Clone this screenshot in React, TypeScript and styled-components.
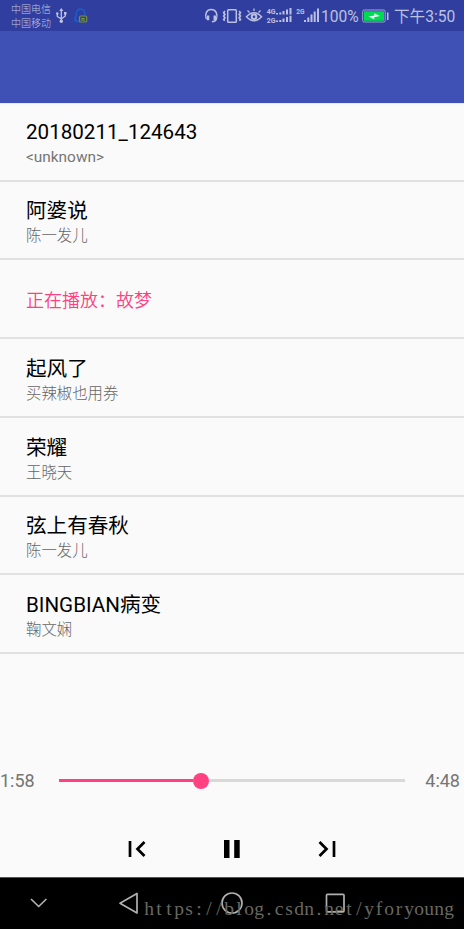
import React from "react";
import styled, { createGlobalStyle } from "styled-components";

const Global = createGlobalStyle`
  * { box-sizing: border-box; }
  body { margin: 0; background: #fff; font-family: Roboto, "Noto Sans CJK SC", sans-serif; }
`;
const Screen = styled.div`
  width: 464px; height: 929px; overflow: hidden; display: flex; flex-direction: column; background: #fafafa;
`;
const StatusBar = styled.header`
  height: 31px; flex: none; background: #303f9f; color: #bcc1e1; display: flex; align-items: center;
  padding: 1px 9px 0 11px; white-space: nowrap;
  svg { display: block; flex: none; }
`;
const Carriers = styled.div`
  width: 41px; font-size: 10px; line-height: 14px; margin-right: 2px; padding-top: 1px; font-weight: 300;
`;
const StatusIcons = styled.div<{ $push?: boolean }>`
  display: flex; align-items: center; flex: none; ${(p) => p.$push && "margin-left: auto;"}
`;
const StatusText = styled.span<{ $w: number; $size: number }>`
  width: ${(p) => p.$w}px; font-size: ${(p) => p.$size}px; line-height: 30px; padding-top: 1px; flex: none;
`;
const AppBar = styled.div`height: 72px; flex: none; background: #3f51b5;`;
const SongList = styled.ul`
  list-style: none; margin: 0; padding: 0; flex: none; height: 551px;
  display: grid; grid-template-rows: repeat(7, 78.71px);
  box-shadow: inset 0 1px #e4e7f6;
`;
const Song = styled.li`
  padding: 16.7px 26px 0; border-bottom: 2px solid #e1e1e1; white-space: nowrap;
  &:first-child { padding-top: 16px; }
`;
const Title = styled.div`font-size: 20.6px; line-height: 27px; color: #000;`;
const Artist = styled.div<{ $light: boolean }>`
  font-size: 15.4px; line-height: 22px; color: ${(p) => (p.$light ? "#666" : "#757575")};
  font-weight: ${(p) => (p.$light ? 300 : 400)};
`;
const Playing = styled.div`font-size: 18px; line-height: 48px; color: #ff4081; font-weight: 350;`;
const Progress = styled.div`
  height: 40px; margin-top: 106.5px; flex: none; display: grid; grid-template-columns: 59px 346px 1fr; align-items: center;
`;
const Time = styled.span<{ $end?: boolean }>`
  font-size: 18px; color: #757575; text-align: ${(p) => (p.$end ? "right" : "left")}; padding-right: ${(p) => (p.$end ? 4 : 0)}px;
`;
const Track = styled.div`
  height: 16px; display: grid; grid-template-columns: 133.5px 16px 1fr; align-items: center;
`;
const Bar = styled.div<{ $played?: boolean }>`
  height: 3px; background: ${(p) => (p.$played ? "#ff4081" : "#d9d9d9")};
`;
const Thumb = styled.div`width: 16px; height: 16px; border-radius: 50%; background: #ff4081;`;
const Controls = styled.div`
  height: 76.5px; flex: none; display: flex; justify-content: center; align-items: center; gap: 65px; padding-top: 20px;
`;
const ControlButton = styled.button`
  width: 30px; height: 30px; border: 0; padding: 0; background: none; display: block;
  svg { display: block; }
`;
const NavBar = styled.nav`
  position: relative; flex: 1; background: #000; border-top: 1px solid #555;
  svg { display: block; }
`;
const Watermark = styled.svg`
  position: absolute; left: 144px; top: 18px;
  text { font-family: "Liberation Serif", serif; font-size: 19.5px; fill: #686860; text-anchor: middle; }
`;

const songs = [
  { title: "20180211_124643", artist: "<unknown>" },
  { title: "阿婆说", artist: "陈一发儿" },
  { playing: "正在播放：故梦" },
  { title: "起风了", artist: "买辣椒也用券" },
  { title: "荣耀", artist: "王晓天" },
  { title: "弦上有春秋", artist: "陈一发儿" },
  { title: "BINGBIAN病变", artist: "鞠文娴" },
];

const address = "https://blog.csdn.net/yforyoung";
const charCentres = Array.from(address, (_, i) => 5 + i * 10).join(" ");

const LeftIcons = () => (
  <svg width="36" height="24" viewBox="54 4 36 24" fill="none" stroke="#c0c5e4">
    <path d="M61.3 10v11M57.3 13.5v3l4 2.5 4-3v-3" strokeWidth="1.3" />
    <path d="M61.3 8l2 3h-4z" fill="#c0c5e4" stroke="none" />
    <circle cx="57.3" cy="13.5" r="1.2" fill="#c0c5e4" stroke="none" />
    <path d="M64 12h2.5v2.5H64z" fill="#c0c5e4" stroke="none" />
    <circle cx="61.3" cy="21.2" r="1.7" fill="#c0c5e4" stroke="none" />
    <path d="M79 21.500h-2.500l-.5-1.500-1.200.5c-.2-2 .4-3.200 1.400-4.500 0-4.500 1.500-7 4.400-7s4.400 2.500 4.400 6.500" stroke="#1762c9" strokeWidth="1.300" />
    <rect x="79.500" y="16" width="7.200" height="6" rx="1" stroke="#72894f" strokeWidth="1.200" fill="#35514f" />
    <path d="M81.500 18.500h3M81 20h4" stroke="#91a756" strokeWidth=".8" />
  </svg>
);

const RightIcons = () => (
  <svg width="118" height="24" viewBox="203 4 118 24" fill="none" stroke="#bcc1e1">
    <path d="M206.300 19c-1.900-5.200.6-9.500 4.900-9.500 4.500 0 7 4.300 5.200 9.500-.7 1.900-2 2.700-4.500 2.700" strokeWidth="1.500" />
    <path d="M208 15.500v4.800M214.800 15.500v4.800" strokeWidth="2.500" />
    <rect x="227.700" y="9.700" width="8.600" height="12.600" rx=".8" strokeWidth="1.500" />
    <path d="M224.900 11l-1.200 1.700 1.200 1.700-1.200 1.700 1.200 1.700-1.200 1.700 1 1.200M239.200 11l1.200 1.700-1.200 1.700 1.200 1.700-1.200 1.700 1.200 1.700-1 1.200" strokeWidth="1.700" />
    <path d="M246.500 16.800q7.500-8 15 0-7.500 8-15 0z" strokeWidth="1.600" />
    <circle cx="254" cy="16.800" r="2.300" strokeWidth="2" />
    <path d="M247.500 10.500l2 2M254 8.500v2.500M260.500 10.500l-2 2" strokeWidth="1.300" />
    <g fill="#bcc1e1" stroke="none" fontFamily="Roboto" fontWeight="700" fontSize="7.500">
      <text x="266.700" y="14" textLength="8.800" lengthAdjust="spacingAndGlyphs">4G</text>
      <text x="266.700" y="22.500" textLength="8.800" lengthAdjust="spacingAndGlyphs">2G</text>
      <text x="296.300" y="14.200" textLength="8.300" lengthAdjust="spacingAndGlyphs">2G</text>
      <path d="M276 13h2v1.500h-2zM279.300 12.500h2v2h-2zM282.500 11h2v3.500h-2zM286 9.500h2v5h-2zM289.500 8h2v6.500h-2zM276 20.500h2V22h-2zM279.300 20h2v2h-2zM282.500 18.500h2V22h-2zM286 17h2v5h-2zM289.500 15.800h2V22h-2z" />
      <path d="M304 20h2v2h-2zM307.300 17.500h2V22h-2zM310.500 14.500h2V22h-2zM313.700 11.500h2V22h-2zM317 8.500h2V22h-2z" />
    </g>
  </svg>
);

const Battery = () => (
  <svg width="33" height="20" viewBox="361 6 33 20">
    <rect x="362.700" y="10" width="22.500" height="12" rx="1.500" fill="none" stroke="#9ea6d3" />
    <rect x="364" y="11.300" width="20" height="9.500" fill="#00d953" />
    <path d="M387 12.500h1.500v7.500H387z" fill="#bcc1e1" />
    <path d="M368.500 16.500l6-1-.5-2.200 6 2.700-6 1.200.5 2.200z" fill="#e6fff0" />
  </svg>
);

export default function App() {
  return (
    <>
      <Global />
      <Screen>
        <StatusBar>
          <Carriers>中国电信<br />中国移动</Carriers>
          <LeftIcons />
          <StatusIcons $push>
            <RightIcons />
            <StatusText $w={40} $size={15.6}>100%</StatusText>
            <Battery />
            <StatusText $w={61} $size={15.6}>下午3:50</StatusText>
          </StatusIcons>
        </StatusBar>
        <AppBar />
        <SongList>
          {songs.map((s, i) => (
            <Song key={i}>
              {s.playing ? (
                <Playing>{s.playing}</Playing>
              ) : (
                <>
                  <Title>{s.title}</Title>
                  <Artist $light={i > 0}>{s.artist}</Artist>
                </>
              )}
            </Song>
          ))}
        </SongList>
        <Progress>
          <Time>1:58</Time>
          <Track><Bar $played /><Thumb /><Bar /></Track>
          <Time $end>4:48</Time>
        </Progress>
        <Controls>
          <ControlButton aria-label="Previous">
            <svg width="30" height="30" viewBox="0 0 30 30" fill="none" stroke="#000" strokeWidth="2.700"><path d="M8 7v16M22.500 8l-7 7 7 7" /></svg>
          </ControlButton>
          <ControlButton aria-label="Pause">
            <svg width="30" height="30" viewBox="0 0 30 30"><path d="M7 6h5.500v18H7zM17.200 6h5.500v18h-5.500z" /></svg>
          </ControlButton>
          <ControlButton aria-label="Next">
            <svg width="30" height="30" viewBox="0 0 30 30" fill="none" stroke="#000" strokeWidth="2.700"><path d="M22 7v16M7.500 8l7 7-7 7" /></svg>
          </ControlButton>
        </Controls>
        <NavBar>
          <svg width="464" height="51" viewBox="0 878 464 51" fill="none" stroke="#b0b0b0" strokeWidth="1.700" strokeLinejoin="round">
            <path d="M31 899l7.700 7.500 7.700-7.500M137 893.500v19.500l-17-9.800z" />
            <circle cx="232" cy="903" r="10" />
            <rect x="326.500" y="894.300" width="17.500" height="17.500" rx="1" />
          </svg>
          <Watermark width="312" height="26">
            <text x={charCentres} y="18.500">{address}</text>
          </Watermark>
        </NavBar>
      </Screen>
    </>
  );
}
